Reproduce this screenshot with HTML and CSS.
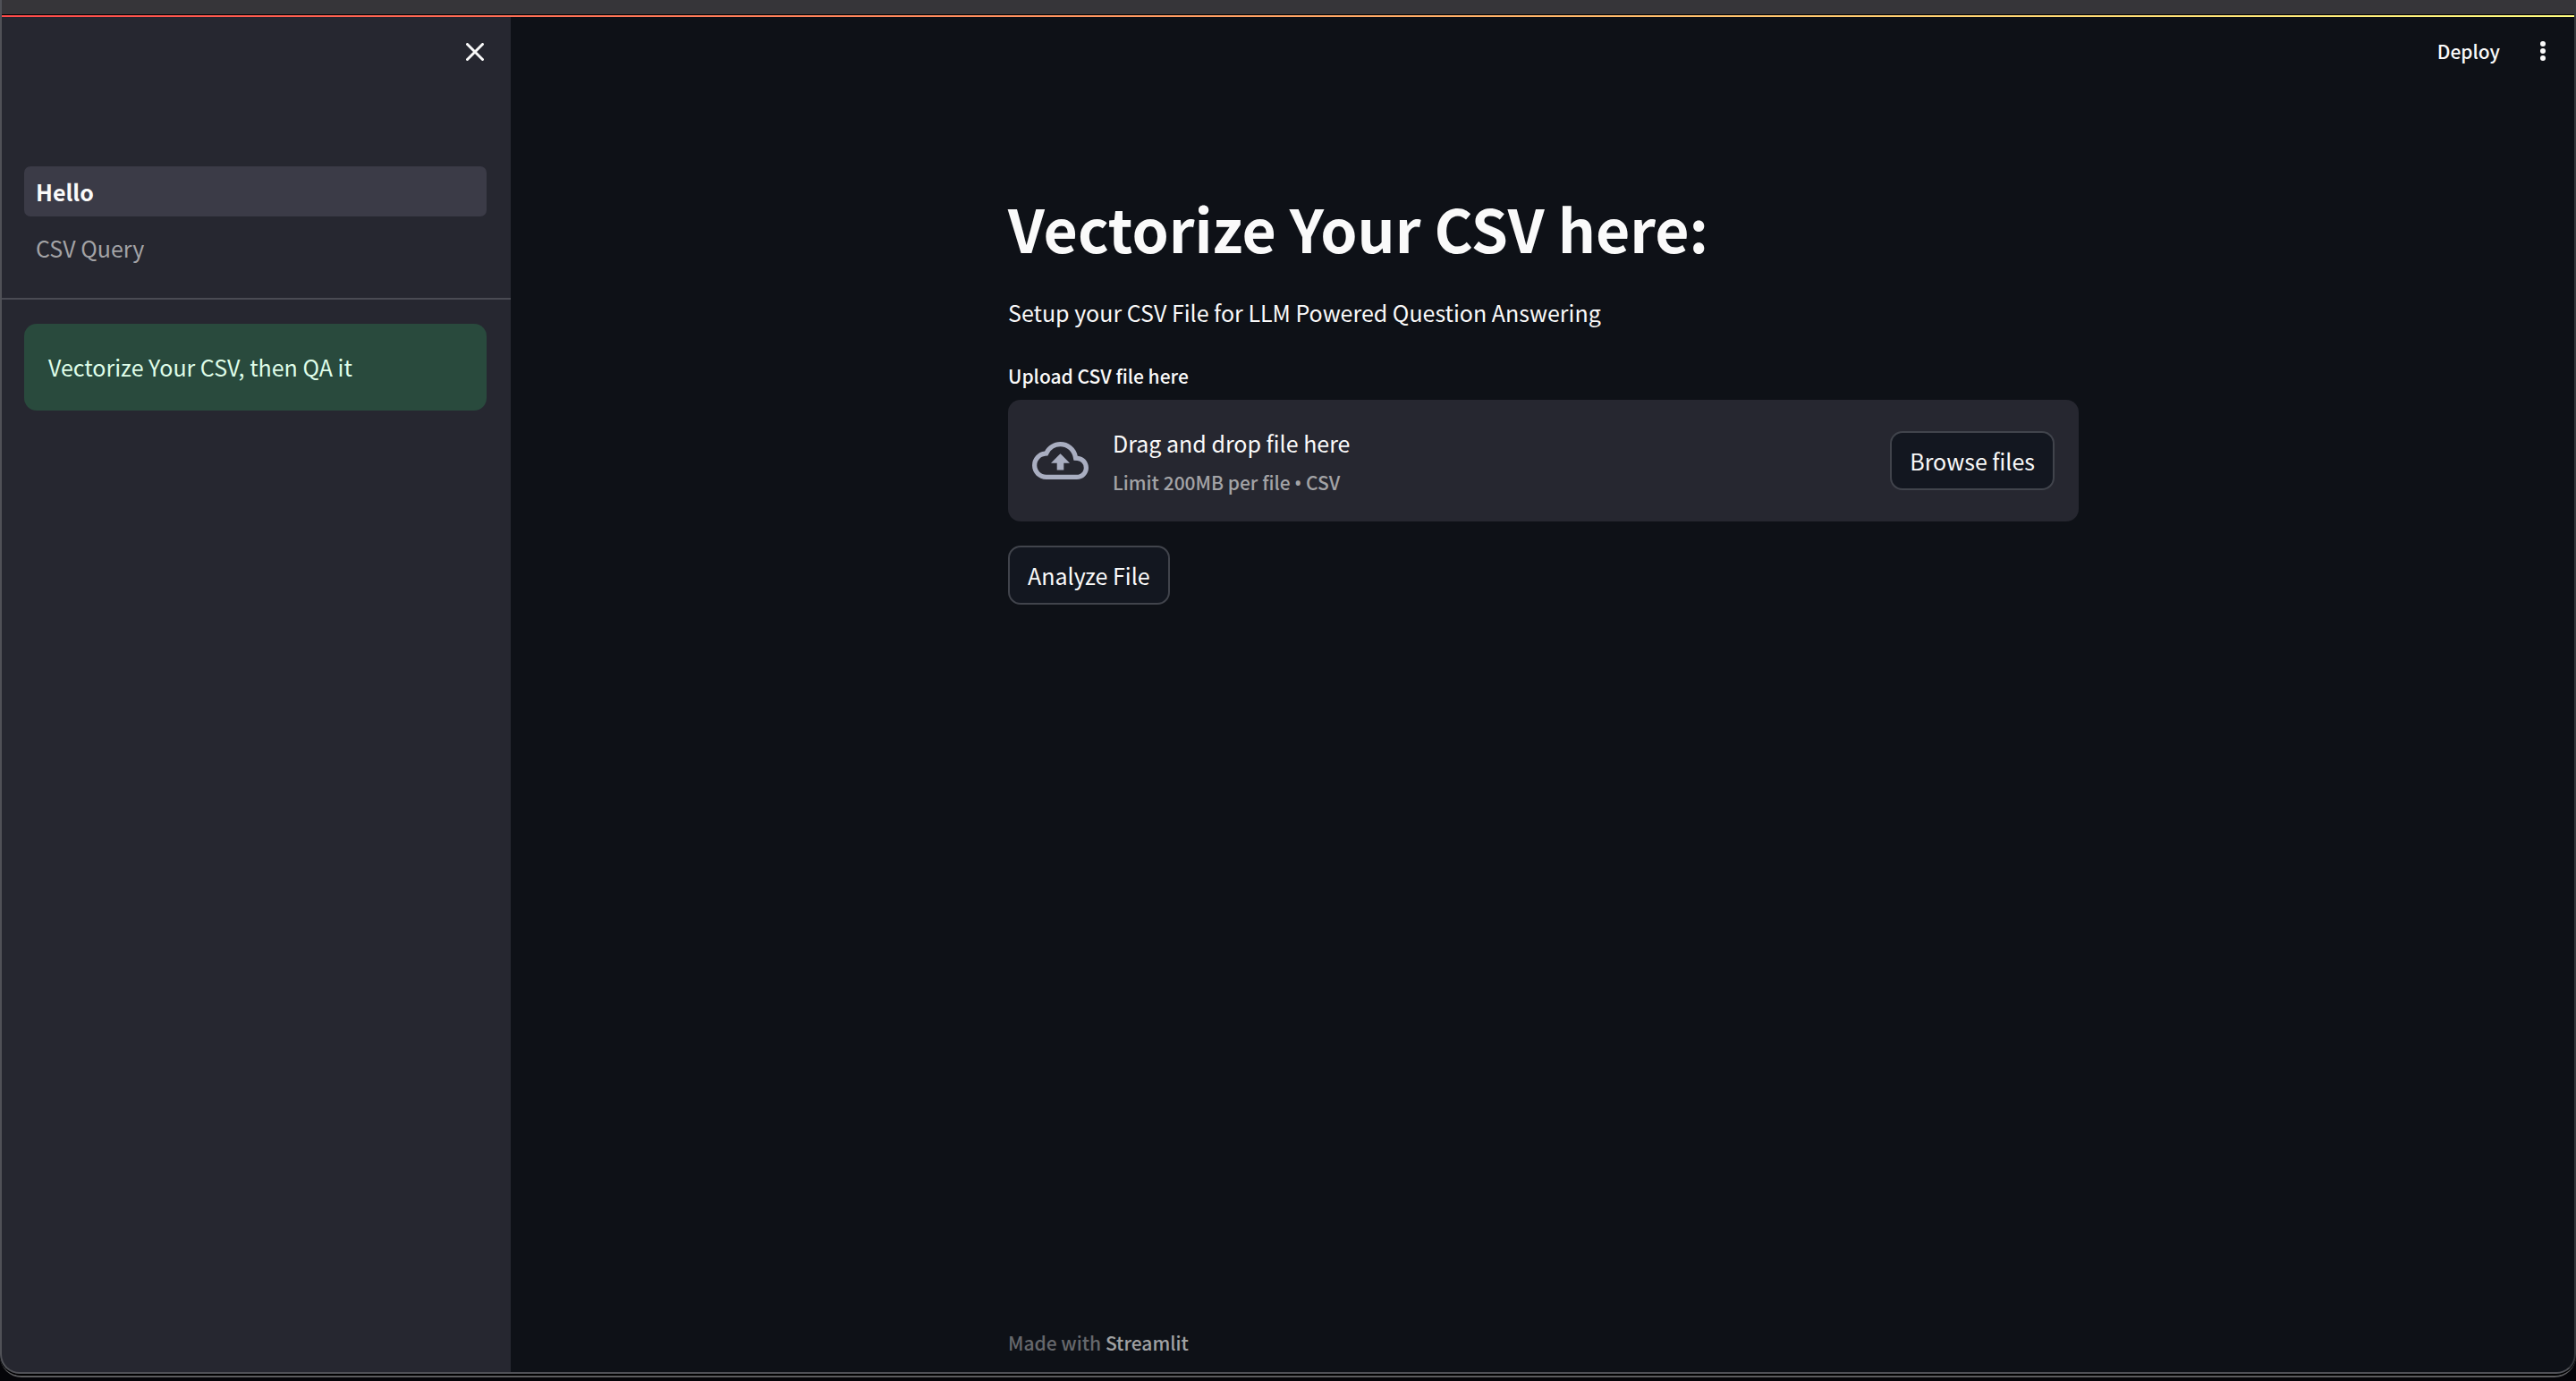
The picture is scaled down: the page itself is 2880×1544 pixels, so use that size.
FILE: index.html
```html
<!DOCTYPE html>
<html lang="en">
<head>
<meta charset="utf-8">
<meta name="viewport" content="width=device-width, initial-scale=1">
<title>Vectorize Your CSV</title>
<link rel="stylesheet" href="styles.css">
</head>
<body>
<div class="window">
  <div class="titlebar"></div>
  <div class="decoration"></div>
  <div class="app">
    <aside class="sidebar">
      <div class="sidebar-top">
        <button class="icon-button" type="button" aria-label="Close sidebar">
          <svg class="icon-close" viewBox="0 0 20 20" aria-hidden="true"><path d="M1.5 1.5l17 17M18.5 1.5l-17 17"/></svg>
        </button>
      </div>
      <nav class="nav">
        <a class="nav-link active" href="#hello">Hello</a>
        <a class="nav-link" href="#csv-query">CSV Query</a>
      </nav>
      <div class="sidebar-body">
        <div class="alert">Vectorize Your CSV, then QA it</div>
      </div>
    </aside>
    <div class="page">
      <header class="toolbar">
        <button class="deploy" type="button">Deploy</button>
        <button class="icon-button" type="button" aria-label="Main menu">
          <svg class="icon-menu" viewBox="0 0 8 24" aria-hidden="true"><circle cx="4" cy="4" r="3"/><circle cx="4" cy="12" r="3"/><circle cx="4" cy="20" r="3"/></svg>
        </button>
      </header>
      <main class="content">
        <h1 class="title">Vectorize Your CSV here:</h1>
        <p class="intro">Setup your CSV File for LLM Powered Question Answering</p>
        <div class="uploader">
          <span class="upload-label" id="upload-label">Upload CSV file here</span>
          <section class="dropzone" aria-labelledby="upload-label">
            <svg class="icon-cloud" viewBox="0 4 24 16" aria-hidden="true"><path d="M19.35 10.04A7.49 7.49 0 0 0 12 4C9.11 4 6.6 5.64 5.35 8.04A5.994 5.994 0 0 0 0 14c0 3.31 2.69 6 6 6h13c2.76 0 5-2.24 5-5 0-2.64-2.05-4.78-4.65-4.96zM19 18H6c-2.21 0-4-1.79-4-4 0-2.05 1.53-3.76 3.56-3.97l1.07-.11.5-.95A5.469 5.469 0 0 1 12 6c2.62 0 4.88 1.86 5.39 4.43l.3 1.5 1.53.11A2.98 2.98 0 0 1 22 15c0 1.65-1.35 3-3 3zM8 13h2.55v3h2.9v-3H16l-4-4z"/></svg>
            <div class="drop-text">
              <span class="drop-title">Drag and drop file here</span>
              <span class="drop-limit">Limit 200MB per file <span class="bullet">•</span> CSV</span>
            </div>
            <button class="button" type="button">Browse files</button>
          </section>
        </div>
        <button class="button" type="button">Analyze File</button>
      </main>
      <footer class="footer">Made with <a class="footer-link" href="#streamlit">Streamlit</a></footer>
    </div>
  </div>
</div>
</body>
</html>
```
FILE: styles.css
```css
*, *::before, *::after { box-sizing: border-box; }

body {
  margin: 0;
  min-height: 100vh;
  display: flex;
  padding-bottom: 4px;
  background: #050509;
  color: #fafafa;
  font-family: "Noto Sans CJK SC", "Noto Sans", sans-serif;
  font-size: 25px;
  line-height: 44px;
}

button { font: inherit; color: inherit; cursor: pointer; }
a { color: inherit; text-decoration: none; }

.window {
  position: relative;
  flex: 1;
  display: flex;
  flex-direction: column;
  background: #0e1117;
  border-bottom: 2px solid #5b5b5d;
  border-radius: 0 0 24px 24px;
  overflow: hidden;
}

/* Thin rim that the window draws over its own edges */
.window::after {
  content: "";
  position: absolute;
  inset: 0 0 2px;
  border: solid #505157;
  border-width: 0 2px 2px;
  border-right-color: #35383c;
  border-radius: 0 0 22px 22px;
  box-shadow: 0 0 0 2px #000000;
  pointer-events: none;
}

.titlebar { height: 17px; background: #363539; border-bottom: 1px solid #000000; }
.decoration { height: 2px; background: linear-gradient(90deg, #ff4b4b, #fffd80); }
.app { flex: 1; display: flex; }

.sidebar { flex: none; width: 571px; background: #262730; }
.sidebar-top {
  display: flex;
  justify-content: flex-end;
  padding: 21px 22px 0 0;
  height: 167px;
}
.nav {
  display: flex;
  flex-direction: column;
  gap: 7px;
  padding: 0 27px 28px;
  border-bottom: 2px solid #4a4b53;
}
.nav-link {
  padding: 6px 13px;
  border-radius: 7px;
  color: #a3a3a6;
}
.nav-link.active { background: #3b3b47; color: #fafafa; font-weight: 700; }
.sidebar-body { padding: 27px; }
.alert {
  padding: 26px 27px 27px;
  border-radius: 14px;
  background: #294a3d;
  color: #dffde9;
}

.icon-button {
  display: flex;
  align-items: center;
  justify-content: center;
  width: 36px;
  height: 36px;
  padding: 0;
  border: 0;
  background: none;
}
.icon-close { width: 20px; height: 20px; fill: none; stroke: #fafafa; stroke-width: 3; stroke-linecap: round; }
.icon-menu { width: 8px; height: 24px; fill: #fafafa; }

.page { flex: 1; display: flex; flex-direction: column; }
.toolbar {
  display: flex;
  align-items: center;
  justify-content: flex-end;
  gap: 30px;
  height: 75px;
  padding-right: 19px;
}
.deploy { padding: 0; border: 0; background: none; font-size: 21px; font-weight: 500; }

.content {
  flex: 1;
  display: flex;
  flex-direction: column;
  align-items: flex-start;
  gap: 27px;
  width: 100%;
  max-width: 1251px;
  margin: 0 auto;
  padding: 114px 27px 27px;
}
.title { margin: 0; font-size: 66px; line-height: 92px; font-weight: 700; }
.intro { margin: 0; }
.uploader { align-self: stretch; display: flex; flex-direction: column; gap: 5px; }
.upload-label { font-size: 21px; font-weight: 500; }
.dropzone {
  display: flex;
  align-items: center;
  gap: 27px;
  padding: 27px;
  border-radius: 14px;
  background: #262730;
}
.icon-cloud { flex: none; width: 63px; height: 42px; fill: #a9aec1; }
.drop-text { flex: 1; display: flex; flex-direction: column; gap: 7px; }
.drop-title { line-height: 42px; }
.drop-limit { font-size: 21px; line-height: 32px; font-weight: 500; color: #a3a3a6; }
.bullet { font-family: "Noto Sans", sans-serif; }
.button {
  padding: 9px 20px;
  border: 2px solid #41444c;
  border-radius: 14px;
  background: #131720;
}

.footer {
  width: 100%;
  max-width: 1251px;
  margin: 0 auto;
  padding: 0 27px 15px;
  font-size: 21px;
  font-weight: 500;
  color: #66686c;
}
.footer-link { color: #a0a1a3; }
```
